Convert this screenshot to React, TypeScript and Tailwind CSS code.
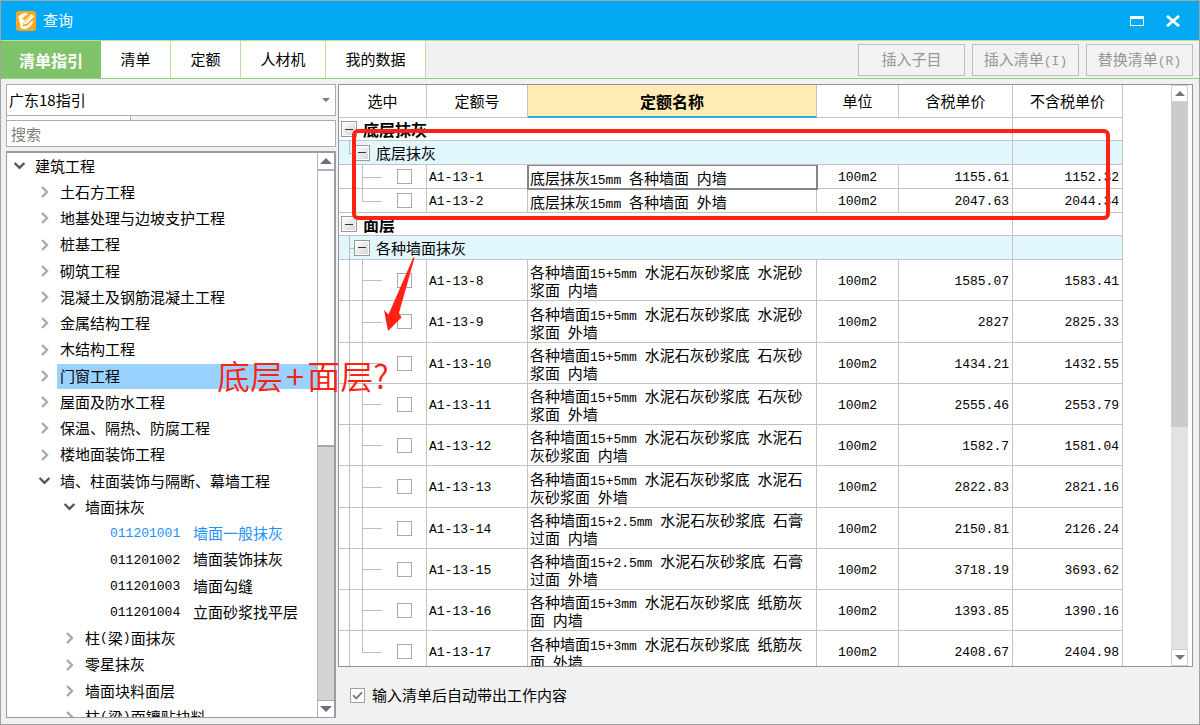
import type { ReactNode } from "react";

const CJK = "font-['Noto_Sans_CJK_SC',sans-serif]";
const MONO = "font-['Liberation_Mono','Noto_Sans_CJK_SC',monospace] text-[13px]";

/* Sets runs of Latin characters in the narrow monospaced face. */
function Txt({ children }: { children: string }) {
  return (
    <>
      {children.split(/([\x20-\x7e]+)/).map((part, i) =>
        i % 2 ? (
          <span key={i} className={`${MONO} leading-[10px] whitespace-pre`}>
            {part}
          </span>
        ) : (
          part
        ),
      )}
    </>
  );
}

type Node = { level: number; state: "open" | "closed" | "leaf"; label: string; code?: string; selected?: boolean; active?: boolean };

const tree: Node[] = [
  { level: 0, state: "open", label: "建筑工程" },
  { level: 1, state: "closed", label: "土石方工程" },
  { level: 1, state: "closed", label: "地基处理与边坡支护工程" },
  { level: 1, state: "closed", label: "桩基工程" },
  { level: 1, state: "closed", label: "砌筑工程" },
  { level: 1, state: "closed", label: "混凝土及钢筋混凝土工程" },
  { level: 1, state: "closed", label: "金属结构工程" },
  { level: 1, state: "closed", label: "木结构工程" },
  { level: 1, state: "closed", label: "门窗工程", selected: true },
  { level: 1, state: "closed", label: "屋面及防水工程" },
  { level: 1, state: "closed", label: "保温、隔热、防腐工程" },
  { level: 1, state: "closed", label: "楼地面装饰工程" },
  { level: 1, state: "open", label: "墙、柱面装饰与隔断、幕墙工程" },
  { level: 2, state: "open", label: "墙面抹灰" },
  { level: 3, state: "leaf", code: "011201001", label: "墙面一般抹灰", active: true },
  { level: 3, state: "leaf", code: "011201002", label: "墙面装饰抹灰" },
  { level: 3, state: "leaf", code: "011201003", label: "墙面勾缝" },
  { level: 3, state: "leaf", code: "011201004", label: "立面砂浆找平层" },
  { level: 2, state: "closed", label: "柱(梁)面抹灰" },
  { level: 2, state: "closed", label: "零星抹灰" },
  { level: 2, state: "closed", label: "墙面块料面层" },
  { level: 2, state: "closed", label: "柱(梁)面镶贴块料" },
];

const indent = ["pl-[5px]", "pl-[30px]", "pl-[55px]", "pl-[80px]"];

function Chevron({ state }: { state: Node["state"] }) {
  if (state === "leaf") return <span className="w-[23px] shrink-0" />;
  return (
    <button aria-label={state === "open" ? "收起" : "展开"} className="w-[23px] shrink-0">
      <svg viewBox="0 0 16 16" className="size-4" fill="none" strokeWidth="2.4">
        {state === "open" ? (
          <path d="M2.6 5 L7.5 9.8 L12.4 5" stroke="#555" />
        ) : (
          <path d="M5 3 L10 8 L5 13" stroke="#a9a9a9" />
        )}
      </svg>
    </button>
  );
}

function Triangle({ up }: { up?: boolean }) {
  return (
    <svg viewBox="0 0 12 6" className="h-1.5 w-3" fill="#6b6f7e">
      <path d={up ? "M0 6 L6 0 L12 6 Z" : "M0 0 L12 0 L6 6 Z"} />
    </svg>
  );
}

type Item = { code: string; name: [string, string?]; price: string; net: string };

const base: Item[] = [
  { code: "A1-13-1", name: ["底层抹灰15mm 各种墙面 内墙"], price: "1155.61", net: "1152.32" },
  { code: "A1-13-2", name: ["底层抹灰15mm 各种墙面 外墙"], price: "2047.63", net: "2044.34" },
];

const surface: Item[] = [
  { code: "A1-13-8", name: ["各种墙面15+5mm 水泥石灰砂浆底 水泥砂", "浆面 内墙"], price: "1585.07", net: "1583.41" },
  { code: "A1-13-9", name: ["各种墙面15+5mm 水泥石灰砂浆底 水泥砂", "浆面 外墙"], price: "2827", net: "2825.33" },
  { code: "A1-13-10", name: ["各种墙面15+5mm 水泥石灰砂浆底 石灰砂", "浆面 内墙"], price: "1434.21", net: "1432.55" },
  { code: "A1-13-11", name: ["各种墙面15+5mm 水泥石灰砂浆底 石灰砂", "浆面 外墙"], price: "2555.46", net: "2553.79" },
  { code: "A1-13-12", name: ["各种墙面15+5mm 水泥石灰砂浆底 水泥石", "灰砂浆面 内墙"], price: "1582.7", net: "1581.04" },
  { code: "A1-13-13", name: ["各种墙面15+5mm 水泥石灰砂浆底 水泥石", "灰砂浆面 外墙"], price: "2822.83", net: "2821.16" },
  { code: "A1-13-14", name: ["各种墙面15+2.5mm 水泥石灰砂浆底 石膏", "过面 内墙"], price: "2150.81", net: "2126.24" },
  { code: "A1-13-15", name: ["各种墙面15+2.5mm 水泥石灰砂浆底 石膏", "过面 外墙"], price: "3718.19", net: "3693.62" },
  { code: "A1-13-16", name: ["各种墙面15+3mm 水泥石灰砂浆底 纸筋灰", "面 内墙"], price: "1393.85", net: "1390.16" },
  { code: "A1-13-17", name: ["各种墙面15+3mm 水泥石灰砂浆底 纸筋灰", "面 外墙"], price: "2408.67", net: "2404.98" },
];

const LINE = "absolute bg-[#bcbcbc]";
const BORDER = "border-r border-b border-[#c3c3c3]";
const CELL = `${BORDER} p-0`;
const VALUE = `${BORDER} ${MONO} pt-[3px] leading-[18px]`;

function Minus() {
  return (
    <button
      aria-label="收起"
      className="relative flex size-4 shrink-0 items-center justify-center border border-[#999] bg-linear-to-br from-white to-[#d4d4d4] outline outline-1 -outline-offset-2 outline-white"
    >
      <span className="h-px w-2 bg-[#333]" />
    </button>
  );
}

function GroupRow({ label }: { label: string }) {
  return (
    <tr className="h-[23px]">
      <td colSpan={5} className={CELL}>
        <div className="flex items-center gap-1.5 pl-0.5 text-[16px] leading-[20px] font-bold">
          <Minus />
          {label}
        </div>
      </td>
      <td className={CELL} />
    </tr>
  );
}

function SubGroupRow({ label, last }: { label: string; last?: boolean }) {
  return (
    <tr className="h-6 bg-[#e2f6fe]">
      <td colSpan={5} className={`${CELL} relative`}>
        <span className={`${LINE} top-0 left-2.5 w-px ${last ? "h-3" : "-bottom-px"}`} />
        <span className={`${LINE} top-3 left-2.5 h-px w-1.5`} />
        <div className="flex items-center gap-1.5 pl-[15px] text-[15px] leading-[20px]">
          <Minus />
          {label}
        </div>
      </td>
      <td className={CELL} />
    </tr>
  );
}

function ItemRow({ item, last, outer, focused }: { item: Item; last: boolean; outer?: boolean; focused?: boolean }) {
  const tall = item.name.length > 1;
  return (
    <tr className={tall ? "h-[41px] nth-[4n]:h-[42px]" : "h-6"}>
      <td className={`${CELL} relative`}>
        {outer && <span className={`${LINE} top-0 -bottom-px left-2.5 w-px`} />}
        <span className={`${LINE} top-0 left-[23px] w-px ${last ? "h-1/2" : "-bottom-px"}`} />
        <span className={`${LINE} top-1/2 left-[23px] h-px w-5`} />
        <input
          type="checkbox"
          aria-label={item.code}
          className="ml-[58px] block size-[15px] appearance-none border border-[#a9a9a9] bg-white"
        />
      </td>
      <td className={`${VALUE} pl-0.5`}>{item.code}</td>
      <td className={`${BORDER} pt-0.5 pl-0.5 text-[15px] leading-[18px] whitespace-nowrap ${focused ? "outline-2 -outline-offset-1 outline-[#858585]" : ""}`}>
        {item.name.map((line, i) => (
          <div key={i}>
            <Txt>{line ?? ""}</Txt>
          </div>
        ))}
      </td>
      <td className={`${VALUE} text-center`}>100m2</td>
      <td className={`${VALUE} pr-[3px] text-right`}>{item.price}</td>
      <td className={`${VALUE} pr-[3px] text-right`}>{item.net}</td>
    </tr>
  );
}

function Tab({ children, active, width }: { children: ReactNode; active?: boolean; width: string }) {
  return (
    <button
      role="tab"
      aria-selected={!!active}
      className={`${width} ${active ? "bg-[#7fc36b] text-[16px] font-bold text-white" : "border-r border-[#b4e0a0] bg-white text-[15px]"}`}
    >
      {children}
    </button>
  );
}

function ToolButton({ children }: { children: string }) {
  return (
    <button disabled className="h-8 w-[107px] border border-[#bdbdbd] bg-[#f2f2f2] text-[15px] text-[#969696]">
      <Txt>{children}</Txt>
    </button>
  );
}

export default function App() {
  return (
    <div className={`${CJK} relative flex h-screen flex-col overflow-hidden border border-[#a3a3a3] bg-[#f1f1f1] text-black`}>
      <header className="flex h-[39px] shrink-0 items-center bg-[#03a9f2] pr-[19px] pl-[15px] text-white">
        <svg viewBox="0 0 20 20" className="size-5">
          <rect width="20" height="20" rx="3" fill="#f7a823" />
          <path d="M2.2 5.6 Q5 2.6 9.4 1.8 L12.4 3.4 Q8.6 4.2 6.4 7.6 L8.4 9.6 L15.6 3 L18.2 5.6 L10.8 12.8 L6.6 13.8 L6.8 15.2 Q11.6 15.6 14 11.4 L17.2 9.6 Q16.8 15.6 9.6 18.2 L4.6 17.2 L3.6 11 Z" fill="#fffaf0" />
          <path d="M7 12.6 L14.8 5.2" stroke="#f9c264" strokeWidth="0.9" />
        </svg>
        <h1 className="ml-[7px] flex-1 text-[15px]">查询</h1>
        <button aria-label="最大化" className="mr-[22px] h-2.5 w-3.5 border border-t-3 border-white" />
        <button aria-label="关闭">
          <svg viewBox="0 0 14 12" className="h-3 w-3.5" fill="none" stroke="#fff" strokeWidth="2.8">
            <path d="M1 1 L13 11 M13 1 L1 11" />
          </svg>
        </button>
      </header>

      <nav className="flex h-[39px] shrink-0 items-stretch border-t border-b border-t-[#b4e0a0] border-b-[#93d17e]">
        <div role="tablist" className="flex">
          <Tab active width="w-[100px]">清单指引</Tab>
          <Tab width="w-[70px]">清单</Tab>
          <Tab width="w-[70px]">定额</Tab>
          <Tab width="w-[85px]">人材机</Tab>
          <Tab width="w-[100px]">我的数据</Tab>
        </div>
        <div className="ml-auto flex items-center gap-[7px] pr-1.5">
          <ToolButton>插入子目</ToolButton>
          <ToolButton>插入清单(I)</ToolButton>
          <ToolButton>替换清单(R)</ToolButton>
        </div>
      </nav>

      <main className="flex min-h-0 flex-1 gap-0.5 pt-[5px] pr-1.5 pl-[5px]">
        <aside className="flex w-[330px] shrink-0 flex-col pb-1.5">
          <div className="relative flex">
            <select aria-label="指引" className="h-8 flex-1 appearance-none border border-[#adadad] bg-white pl-0.5 text-[15px]">
              <option>广东18指引</option>
            </select>
            <svg viewBox="0 0 8 4" className="pointer-events-none absolute top-[14px] right-1.5 h-1 w-2" fill="#7a7d88">
              <path d="M0 0 L8 0 L4 4 Z" />
            </svg>
          </div>
          <div className="h-1 w-[125px] border-r border-l border-[#adadad] bg-white" />
          <input
            aria-label="搜索"
            placeholder="搜索"
            className="h-[27px] shrink-0 border border-[#adadad] bg-white pl-1 text-[15px] placeholder:text-[#808080]"
          />
          <div className="mt-1 flex min-h-0 flex-1 border-t-2 border-r-2 border-b border-l border-[#9a9da6] bg-white">
            <ul role="tree" className="min-w-0 flex-1 overflow-hidden text-[15px]">
              {tree.map((n) => (
                <li key={n.code ?? n.label} role="treeitem" className={`flex h-[26px] items-center nth-[4n]:h-[27px] ${indent[n.level]}`}>
                  <Chevron state={n.state} />
                  <span className={`flex h-[25px] items-center whitespace-nowrap ${n.selected ? "-ml-[3px] flex-1 bg-[#99d1ff] pl-[3px]" : ""} ${n.active ? "text-[#1e90ff]" : ""}`}>
                    {n.code && <span className={`${MONO} w-[83px] pt-0.5`}>{n.code}</span>}
                    <Txt>{n.label}</Txt>
                  </span>
                </li>
              ))}
            </ul>
            <div className="flex w-[17px] shrink-0 flex-col border-l border-[#b5b5b5] bg-[#d4d4d4]">
              <button aria-label="向上" className="flex h-[18px] items-center justify-center border-b-2 border-[#b0b0b0] bg-white">
                <Triangle up />
              </button>
              <div className="h-[49%] border-b-2 border-[#a8a8a8] bg-white" />
              <button aria-label="向下" className="mt-auto flex h-[17px] items-center justify-center border-t border-[#a8a8a8] bg-white">
                <Triangle />
              </button>
            </div>
          </div>
        </aside>

        <section className="flex min-w-0 flex-1 flex-col">
          <div className="flex min-h-0 flex-1 border border-[#8f939d] bg-white">
            <div className="mr-12 min-w-0 flex-1 overflow-hidden">
              <table className="w-full table-fixed border-separate border-spacing-0">
                <colgroup>
                  <col className="w-[88px]" />
                  <col className="w-[101px]" />
                  <col />
                  <col className="w-[82px]" />
                  <col className="w-[114px]" />
                  <col className="w-[110px]" />
                </colgroup>
                <thead className="text-[15px]">
                  <tr className="h-[33px]">
                    <th className={`${CELL} font-normal`}>选中</th>
                    <th className={`${CELL} font-normal`}>定额号</th>
                    <th className="border-r border-b-2 border-r-[#c3c3c3] border-b-[#35a7d6] bg-[#ffebb3] p-0 text-[16px] font-bold">定额名称</th>
                    <th className={`${CELL} font-normal`}>单位</th>
                    <th className={`${CELL} font-normal`}>含税单价</th>
                    <th className={`${CELL} font-normal`}>不含税单价</th>
                  </tr>
                </thead>
                <tbody>
                  <GroupRow label="底层抹灰" />
                  <SubGroupRow label="底层抹灰" last />
                  {base.map((item, i) => (
                    <ItemRow key={item.code} item={item} last={i === base.length - 1} focused={i === 0} />
                  ))}
                  <GroupRow label="面层" />
                  <SubGroupRow label="各种墙面抹灰" />
                  {surface.map((item, i) => (
                    <ItemRow key={item.code} item={item} last={i === surface.length - 1} outer />
                  ))}
                </tbody>
              </table>
            </div>
            <div className="mr-1 flex w-[17px] shrink-0 flex-col bg-[#e2e2e2]">
              <button aria-label="向上" className="flex h-[17px] items-center justify-center border border-[#d0d0d0] bg-white">
                <svg viewBox="0 0 10 5" className="h-[5px] w-2.5" fill="#73757f">
                  <path d="M0 5 L5 0 L10 5 Z" />
                </svg>
              </button>
              <div className="h-[56%] bg-[#cbcbcb]" />
              <button aria-label="向下" className="mt-auto flex h-[17px] items-center justify-center border border-[#d0d0d0] bg-white">
                <svg viewBox="0 0 10 5" className="h-[5px] w-2.5" fill="#73757f">
                  <path d="M0 0 L10 0 L5 5 Z" />
                </svg>
              </button>
            </div>
          </div>
          <label className="flex h-[57px] shrink-0 items-center gap-[7px] pl-3 text-[15px]">
            <span className="relative flex">
              <input type="checkbox" defaultChecked className="peer size-[15px] appearance-none border border-[#a0a0a0] bg-white" />
              <svg viewBox="0 0 15 15" className="pointer-events-none absolute inset-0 hidden size-[15px] peer-checked:block" fill="none" stroke="#757a90" strokeWidth="1.8">
                <path d="M3 7.2 L6.2 10.4 L12 4.4" />
              </svg>
            </span>
            输入清单后自动带出工作内容
          </label>
        </section>
      </main>

      <div className="pointer-events-none absolute top-32 left-[351px] h-[91px] w-[758px] rounded-md border-4 border-[#ff2214]" />
      <svg viewBox="0 0 32 74" className="pointer-events-none absolute top-[256px] left-[383px] h-[74px] w-8" fill="#ff2214">
        <path d="M29.5 0 L30.5 1 L15 56 L17.5 60.5 L4 74 L0 53 L4.5 57.5 Z" />
      </svg>
      <p className="pointer-events-none absolute top-[354px] left-[216px] flex text-[33px] leading-[40px] font-[350] whitespace-nowrap text-[#ff2214]">
        底层<span className="px-[3px]">+</span>面层?
      </p>
    </div>
  );
}
